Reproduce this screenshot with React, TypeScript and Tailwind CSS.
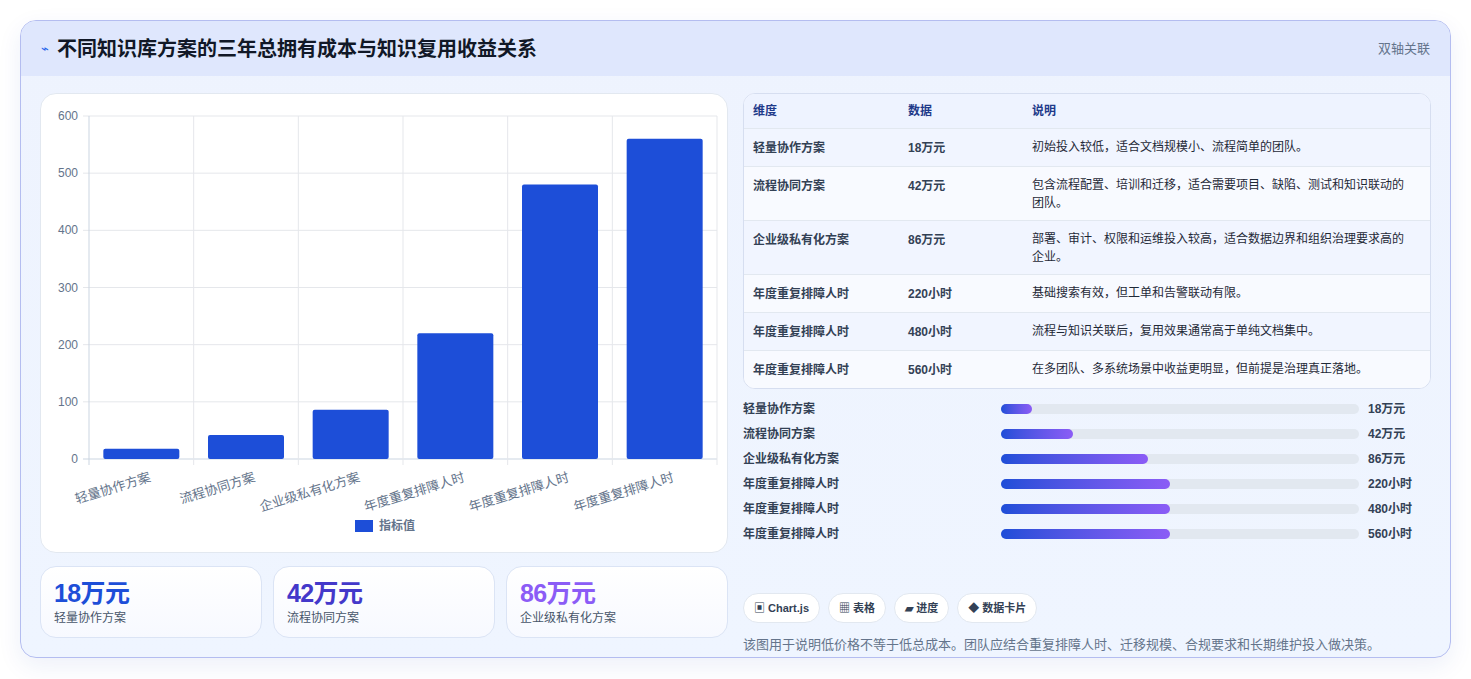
const bars = [
  { label: "轻量协作方案", v: 18 },
  { label: "流程协同方案", v: 42 },
  { label: "企业级私有化方案", v: 86 },
  { label: "年度重复排障人时", v: 220 },
  { label: "年度重复排障人时", v: 480 },
  { label: "年度重复排障人时", v: 560 },
];

const rows = [
  { a: "轻量协作方案", b: "18万元", c: "初始投入较低，适合文档规模小、流程简单的团队。" },
  { a: "流程协同方案", b: "42万元", c: "包含流程配置、培训和迁移，适合需要项目、缺陷、测试和知识联动的团队。" },
  { a: "企业级私有化方案", b: "86万元", c: "部署、审计、权限和运维投入较高，适合数据边界和组织治理要求高的企业。" },
  { a: "年度重复排障人时", b: "220小时", c: "基础搜索有效，但工单和告警联动有限。" },
  { a: "年度重复排障人时", b: "480小时", c: "流程与知识关联后，复用效果通常高于单纯文档集中。" },
  { a: "年度重复排障人时", b: "560小时", c: "在多团队、多系统场景中收益更明显，但前提是治理真正落地。" },
];

const progress = [
  { a: "轻量协作方案", b: "18万元", w: 8.7 },
  { a: "流程协同方案", b: "42万元", w: 20 },
  { a: "企业级私有化方案", b: "86万元", w: 41 },
  { a: "年度重复排障人时", b: "220小时", w: 47.3 },
  { a: "年度重复排障人时", b: "480小时", w: 47.3 },
  { a: "年度重复排障人时", b: "560小时", w: 47.3 },
];

function Chart() {
  const x0 = 48, x1 = 676, y0 = 22, y1 = 365;
  const step = (x1 - x0) / 6;
  const sy = (v: number) => y1 - (v / 600) * (y1 - y0);
  return (
    <svg width="688" height="460" className="block">
      {[0, 100, 200, 300, 400, 500, 600].map((t) => (
        <g key={t}>
          <line x1={x0 - 6} x2={x1} y1={sy(t)} y2={sy(t)} stroke={t === 0 ? "#cbd5e1" : "#e5e7eb"} />
          <text x={x0 - 11} y={sy(t) + 4} textAnchor="end" fontSize="12" fill="#64748b">{t}</text>
        </g>
      ))}
      {Array.from({ length: 7 }).map((_, i) => (
        <line key={i} x1={x0 + i * step} x2={x0 + i * step} y1={y0} y2={y1 + 6} stroke={i === 0 ? "#cbd5e1" : "#e5e7eb"} />
      ))}
      {bars.map((b, i) => {
        const cx = x0 + step * i + step / 2;
        return (
          <g key={i}>
            <rect x={cx - 38} y={sy(b.v)} width="76" height={y1 - sy(b.v)} rx="2" fill="#1d4ed8" />
            <text x={cx + 10} y={y1 + 22} textAnchor="end" fontSize="13" fill="#64748b" transform={`rotate(-17 ${cx + 10} ${y1 + 22})`}>{b.label}</text>
          </g>
        );
      })}
      <rect x="314" y="426" width="18" height="12" fill="#1d4ed8" />
      <text x="338" y="436" fontSize="12" fontWeight="600" fill="#64748b">指标值</text>
    </svg>
  );
}

export default function App() {
  return (
    <div className="min-h-screen bg-white p-5" style={{ fontFamily: '"Liberation Sans", "Noto Sans CJK SC", sans-serif' }}>
      <div className="h-[638px] overflow-hidden rounded-2xl border border-[#b4bdf0] bg-gradient-to-b from-[#eef3fe] to-[#eff5ff] shadow-[0_8px_24px_rgba(30,64,175,0.08)]">
        {/* header */}
        <div className="flex h-[55px] items-center justify-between bg-[#dfe7fd] px-5">
          <div className="flex items-center gap-2">
            <span className="text-[13px] text-[#2563eb]">⌁</span>
            <h1 className="text-[20px] font-bold text-[#111827]">不同知识库方案的三年总拥有成本与知识复用收益关系</h1>
          </div>
          <span className="text-[13px] text-[#64748b]">双轴关联</span>
        </div>

        <div className="grid grid-cols-2 gap-[15px] px-[19px] pt-[17px]">
          {/* left */}
          <div className="flex flex-col gap-[13px]">
            <div className="h-[460px] rounded-2xl border border-[#e2e8f0] bg-white">
              <Chart />
            </div>
            <div className="grid grid-cols-3 gap-[11px]">
              {[
                { v: "18万元", l: "轻量协作方案", c: "text-[#1d4ed8]" },
                { v: "42万元", l: "流程协同方案", c: "text-[#4338ca]" },
                { v: "86万元", l: "企业级私有化方案", c: "text-[#8b5cf6]" },
              ].map((s) => (
                <div key={s.v} className="h-[72px] rounded-2xl border border-[#dbe4f5] bg-gradient-to-b from-white to-[#f7f9ff] px-[13px] pt-[10px]">
                  <div className={`text-[25px] font-bold leading-[32px] tracking-tight ${s.c}`}>{s.v}</div>
                  <div className="text-[12px] text-[#475569]">{s.l}</div>
                </div>
              ))}
            </div>
          </div>

          {/* right */}
          <div className="flex flex-col">
            <div className="overflow-hidden rounded-xl border border-[#d6def0] bg-white">
              <table className="w-full text-left text-[12px]">
                <thead>
                  <tr className="h-[34px] bg-[#eef3ff] text-[#1e3a8a]">
                    <th className="w-[164px] pl-[9px] font-bold">维度</th>
                    <th className="w-[124px] font-bold">数据</th>
                    <th className="font-bold">说明</th>
                  </tr>
                </thead>
                <tbody>
                  {rows.map((r, i) => (
                    <tr key={i} className={`border-t border-[#e2e8f0] align-top ${i % 2 === 0 ? "bg-[#f1f5ff]" : "bg-[#f8faff]"}`}>
                      <td className="pl-[9px] pt-[10px] pb-[9px] font-semibold text-[#334155]">{r.a}</td>
                      <td className="pt-[10px] font-semibold text-[#334155]">{r.b}</td>
                      <td className="pt-[9px] pb-[8px] pr-4 leading-[18px] text-[#1f2937]">{r.c}</td>
                    </tr>
                  ))}
                </tbody>
              </table>
            </div>

            <div className="mt-[11px] flex flex-col gap-[7px]">
              {progress.map((p, i) => (
                <div key={i} className="flex h-[18px] items-center text-[12px] font-semibold text-[#334155]">
                  <span className="w-[258px]">{p.a}</span>
                  <div className="h-[10px] w-[358px] rounded-full bg-[#e2e8f0]">
                    <div className="h-full rounded-full bg-gradient-to-r from-[#1d4ed8] to-[#8b5cf6]" style={{ width: `${p.w}%` }} />
                  </div>
                  <span className="ml-[9px]">{p.b}</span>
                </div>
              ))}
            </div>

            <div className="mt-[50px] flex gap-[8px]">
              {["▣ Chart.js", "▦ 表格", "▰ 进度", "◆ 数据卡片"].map((c) => (
                <span key={c} className="rounded-full border border-[#e2e8f0] bg-white px-[10px] py-[6px] text-[11px] font-semibold text-[#334155]">{c}</span>
              ))}
            </div>
            <p className="mt-[12px] text-[13px] text-[#64748b]">该图用于说明低价格不等于低总成本。团队应结合重复排障人时、迁移规模、合规要求和长期维护投入做决策。</p>
          </div>
        </div>
      </div>
    </div>
  );
}
